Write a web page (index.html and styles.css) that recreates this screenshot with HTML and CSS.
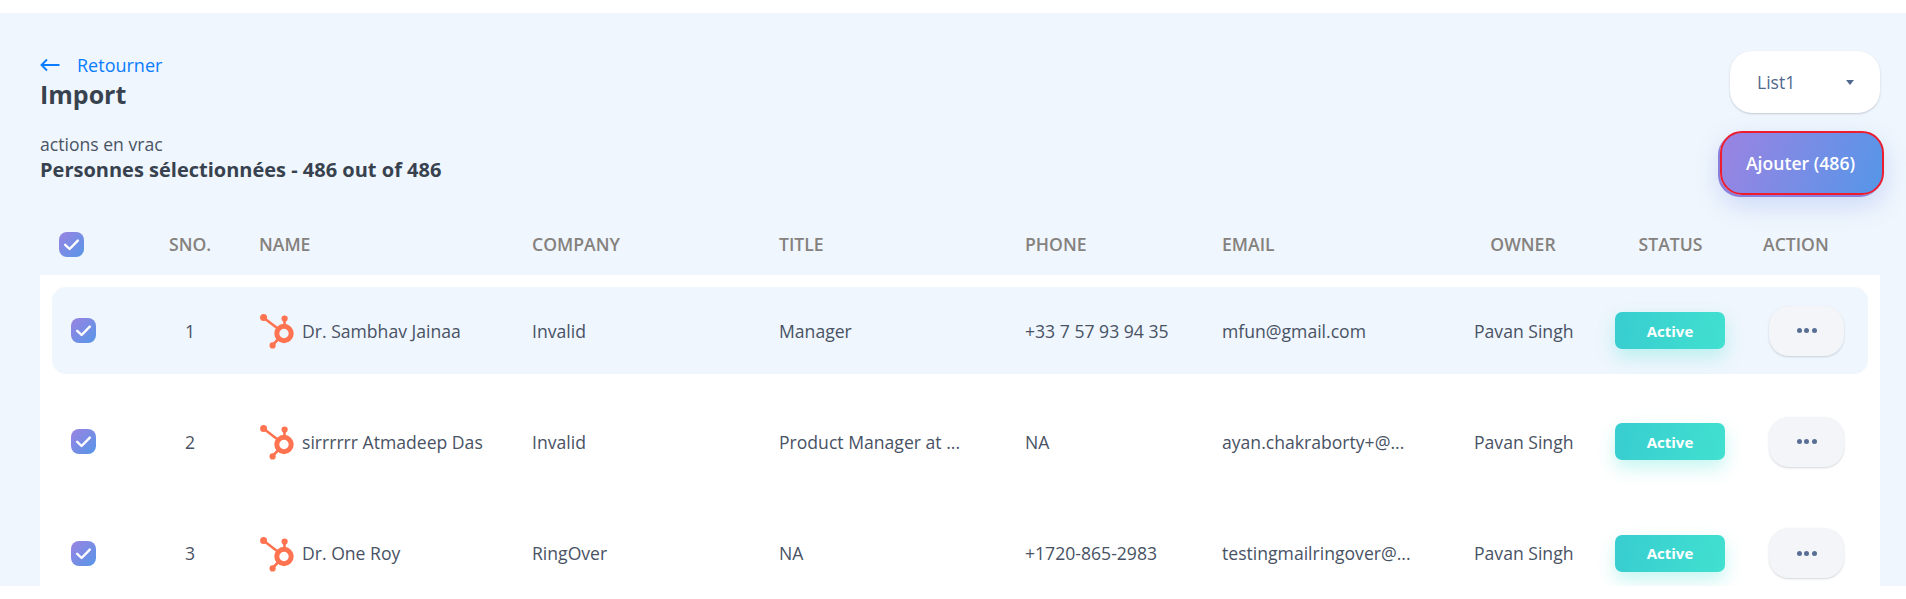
FILE: index.html
```html
<!DOCTYPE html>
<html lang="fr">
<head>
<meta charset="utf-8">
<title>Import</title>
<link rel="stylesheet" href="styles.css">
</head>
<body>
<svg class="defs" width="0" height="0" aria-hidden="true">
  <defs>
    <linearGradient id="cg" x1="0" y1="0" x2="1" y2="1">
      <stop offset="0" stop-color="#9b83e2"/>
      <stop offset="1" stop-color="#5596e8"/>
    </linearGradient>
    <symbol id="check" viewBox="0 0 25 25">
      <rect width="25" height="25" rx="8" fill="url(#cg)"/>
      <path d="M6.2 12.8l4.4 4.2 8.2-8.4" fill="none" stroke="#fff" stroke-width="2.4" stroke-linecap="round" stroke-linejoin="round"/>
    </symbol>
    <symbol id="hubspot" viewBox="0 0 36 37">
      <g fill="none" stroke="#ff7350">
        <circle cx="25" cy="20.5" r="7.2" stroke-width="5"/>
        <path d="M5 5l15 11.5M25.5 6v8M19.5 26l-6 6" stroke-width="2.6"/>
      </g>
      <g fill="#ff7350">
        <circle cx="4.6" cy="4.6" r="3.5"/>
        <circle cx="25.6" cy="5.6" r="3.1"/>
        <circle cx="13.6" cy="32.4" r="3.1"/>
      </g>
    </symbol>
  </defs>
</svg>
<main class="page">
  <section class="top">
    <div class="intro">
      <a class="back" href="#">
        <svg class="back-arrow" viewBox="0 0 20 14" aria-hidden="true"><path d="M19.5 7H1.5M7 1.5L1.5 7 7 12.5" fill="none" stroke="#0a7cff" stroke-width="1.9"/></svg>
        <span>Retourner</span>
      </a>
      <h1 class="title">Import</h1>
      <p class="bulk">actions en vrac</p>
      <p class="selected">Personnes sélectionnées - 486 out of 486</p>
    </div>
    <div class="controls">
      <button class="select" type="button"><span>List1</span><i class="caret"></i></button>
      <button class="add" type="button">Ajouter (486)</button>
    </div>
  </section>

  <div class="thead">
    <svg class="head-check"><use href="#check"/></svg>
    <span>SNO.</span>
    <span>NAME</span>
    <span>COMPANY</span>
    <span>TITLE</span>
    <span>PHONE</span>
    <span>EMAIL</span>
    <span class="c-owner">OWNER</span>
    <span class="c-status">STATUS</span>
    <span>ACTION</span>
  </div>

  <div class="tbody">
    <div class="row row-active">
      <svg class="row-check"><use href="#check"/></svg>
      <span class="num">1</span>
      <span class="name"><svg class="hs"><use href="#hubspot"/></svg>Dr. Sambhav Jainaa</span>
      <span>Invalid</span>
      <span>Manager</span>
      <span>+33 7 57 93 94 35</span>
      <span>mfun@gmail.com</span>
      <span class="c-owner">Pavan Singh</span>
      <span class="badge">Active</span>
      <button class="more" type="button"><i></i><i></i><i></i></button>
    </div>
    <div class="row">
      <svg class="row-check"><use href="#check"/></svg>
      <span class="num">2</span>
      <span class="name"><svg class="hs"><use href="#hubspot"/></svg>sirrrrrr Atmadeep Das</span>
      <span>Invalid</span>
      <span>Product Manager at ...</span>
      <span>NA</span>
      <span>ayan.chakraborty+@...</span>
      <span class="c-owner">Pavan Singh</span>
      <span class="badge">Active</span>
      <button class="more" type="button"><i></i><i></i><i></i></button>
    </div>
    <div class="row">
      <svg class="row-check"><use href="#check"/></svg>
      <span class="num">3</span>
      <span class="name"><svg class="hs"><use href="#hubspot"/></svg>Dr. One Roy</span>
      <span>RingOver</span>
      <span>NA</span>
      <span>+1720-865-2983</span>
      <span>testingmailringover@...</span>
      <span class="c-owner">Pavan Singh</span>
      <span class="badge">Active</span>
      <button class="more" type="button"><i></i><i></i><i></i></button>
    </div>
  </div>
</main>
</body>
</html>
```
FILE: styles.css
```css
* { box-sizing: border-box; }
html, body { margin: 0; padding: 0; height: 100%; background: #fff; overflow: hidden; }
body { font-family: "Open Sans", sans-serif; color: #3f4a5c; font-size: 17.6px; }
.defs { position: absolute; }

.page {
  margin-top: 13px;
  height: 573px;
  background: #eff6fd;
  padding: 0 26px 0 40px;
  overflow: hidden;
}

.top { display: flex; justify-content: space-between; height: 200px; }
.intro { padding-top: 41px; }
.back { display: flex; align-items: center; gap: 17px; height: 22px; color: #0a7cff; text-decoration: none; font-size: 18px; }
.back-arrow { width: 20px; height: 14px; flex: none; }
.title { margin: 1px 0 0; font-size: 25px; line-height: 34px; font-weight: 700; color: #38424f; }
.bulk { margin: 21px 0 0; font-size: 17.6px; line-height: 24px; color: #4a5364; font-weight: 400; }
.selected { margin: 1px 0 0; font-size: 20px; line-height: 25px; font-weight: 700; color: #38424f; }

.controls { display: flex; flex-direction: column; align-items: flex-end; padding-top: 38px; }
.select {
  width: 150px; height: 62px;
  display: flex; align-items: center; justify-content: space-between;
  padding: 0 26px 0 27px;
  background: #fff; border: 0; border-radius: 22px;
  box-shadow: 0 1px 2px rgba(60, 70, 90, .25);
  font: 400 17.6px "Open Sans", sans-serif; color: #51688f;
}
.caret { width: 0; height: 0; border: 4px solid transparent; border-top: 5px solid #51688f; border-bottom: 0; }
.add {
  width: 164px; height: 64px; margin-top: 18px; margin-right: -4px;
  padding: 0 3px 0 0;
  border: 2px solid #ed1c2e; border-radius: 22px;
  background: linear-gradient(110deg, #9b83e2, #5596e8);
  box-shadow: -2px 2px 0 #8a80dc, 0 10px 26px rgba(90, 120, 230, .24);
  color: #fff; font: 600 17.6px "Open Sans", sans-serif;
}

.thead, .row { display: grid; align-items: center; }
.thead {
  grid-template-columns: 110px 90px 273px 247px 246px 197px 252px 141px 148px auto;
  height: 62px; padding-left: 19px;
  font-weight: 600; color: #85817d; font-size: 17.6px;
}
.head-check { width: 25px; height: 25px; }
.thead .c-owner { width: 98px; text-align: center; }
.thead .c-status { width: 111px; text-align: center; }

.tbody { background: #fff; width: 1840px; padding: 12px 12px 0; height: 311px; }
.row {
  grid-template-columns: 76px 112px 273px 247px 246px 197px 252px 141px 154px 75px;
  height: 87px; padding-left: 19px; margin-bottom: 24.3px; border-radius: 14px;
  color: #485264; font-size: 17.6px; white-space: nowrap;
}
.row-active { background: #eff6fd; }
.row-check { width: 25px; height: 25px; }
.num { width: 86px; text-align: center; }
.name { display: flex; align-items: center; gap: 7px; }
.hs { width: 36px; height: 37px; flex: none; margin-top: 2px; }
.c-owner { width: 98px; text-align: center; }
.badge {
  width: 110px; height: 37px; display: flex; align-items: center; justify-content: center;
  border-radius: 7px; color: #fff; font-weight: 700; font-size: 15px;
  background: linear-gradient(100deg, #38cdd0, #41e0d0);
  box-shadow: 0 8px 18px rgba(64, 224, 208, .3);
}
.more {
  width: 75px; height: 50px; display: flex; align-items: center; justify-content: center; gap: 2.5px;
  background: #f3f5f8; border: 0; border-radius: 20px; padding: 0;
  box-shadow: 0 1px 2px rgba(60, 70, 90, .22);
}
.more i { width: 5px; height: 5px; border-radius: 50%; background: #586e94; }
```
